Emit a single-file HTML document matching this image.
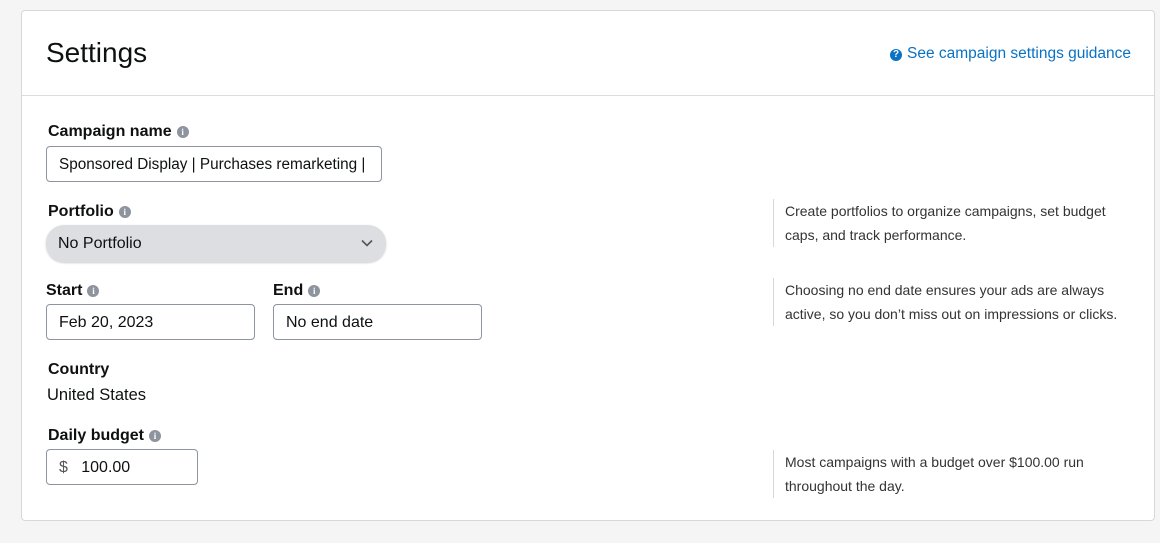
<!DOCTYPE html>
<html><head><style>
*{box-sizing:border-box;margin:0;padding:0}
body{width:1160px;height:543px;background:#f5f5f5;font-family:"Liberation Sans",sans-serif;color:#0f1111;position:relative;overflow:hidden}
.card{position:absolute;left:21px;top:10px;width:1134px;height:511px;background:#fff;border:1px solid #d5d9d9;border-radius:4px}
.a{position:absolute}
.lbl{font-weight:bold;font-size:16px;color:#0f1111}
.i{display:inline-block;width:12px;height:12px;border-radius:50%;background:#8d949e;color:#fff;font-size:9px;font-weight:bold;text-align:center;line-height:12px;vertical-align:1px;margin-left:5px;font-family:"Liberation Serif",serif}
.inp{position:absolute;height:36px;border:1px solid #8d949e;border-radius:4px;font-size:16px;padding:0 12px;line-height:35px;background:#fff;white-space:nowrap;overflow:hidden}
.help{position:absolute;left:773px;border-left:1px solid #d5d9d9;padding-left:11px;font-size:14px;line-height:24px;color:#333}
</style></head><body>
<div class="card"></div>
<div class="a" style="left:46px;top:37px;font-size:28px;color:#0f1111">Settings</div>
<div class="a" style="left:890px;top:45px;font-size:15.5px;color:#0972c5"><span style="display:inline-block;width:12px;height:12px;border-radius:50%;background:#0972c5;color:#fff;font-size:10px;font-weight:bold;text-align:center;line-height:12px;vertical-align:1px;margin-right:5px">?</span>See campaign settings guidance</div>
<div class="a" style="left:22px;top:95px;width:1132px;height:1px;background:#dcdcdc"></div>

<div class="a lbl" style="left:48px;top:123px">Campaign name<span class="i">i</span></div>
<div class="inp" style="left:46px;top:146px;width:336px;font-size:15.3px">Sponsored Display | Purchases remarketing |</div>

<div class="a lbl" style="left:48px;top:203px">Portfolio<span class="i">i</span></div>
<div class="inp" style="left:46px;top:225px;width:340px;height:37px;border:none;background:#dcdee2;border-radius:18px;box-shadow:0 1px 2px rgba(0,0,0,.2);line-height:37px">No Portfolio
<svg style="position:absolute;right:13px;top:14px" width="12" height="8" viewBox="0 0 12 8"><path d="M1 1.5l5 5 5-5" fill="none" stroke="#555" stroke-width="1.6"/></svg></div>

<div class="a lbl" style="left:46px;top:282px">Start<span class="i">i</span></div>
<div class="a lbl" style="left:273px;top:282px">End<span class="i">i</span></div>
<div class="inp" style="left:46px;top:304px;width:209px">Feb 20, 2023</div>
<div class="inp" style="left:273px;top:304px;width:209px">No end date</div>

<div class="a lbl" style="left:48px;top:361px">Country</div>
<div class="a" style="left:47px;top:386px;font-size:16.5px">United States</div>

<div class="a lbl" style="left:48px;top:427px">Daily budget<span class="i">i</span></div>
<div class="inp" style="left:46px;top:449px;width:152px"><span style="color:#555">$</span>&nbsp;&nbsp;&nbsp;100.00</div>

<div class="help" style="top:199px">Create portfolios to organize campaigns, set budget<br>caps, and track performance.</div>
<div class="help" style="top:278px">Choosing no end date ensures your ads are always<br>active, so you don’t miss out on impressions or clicks.</div>
<div class="help" style="top:450px">Most campaigns with a budget over $100.00 run<br>throughout the day.</div>
</body></html>
